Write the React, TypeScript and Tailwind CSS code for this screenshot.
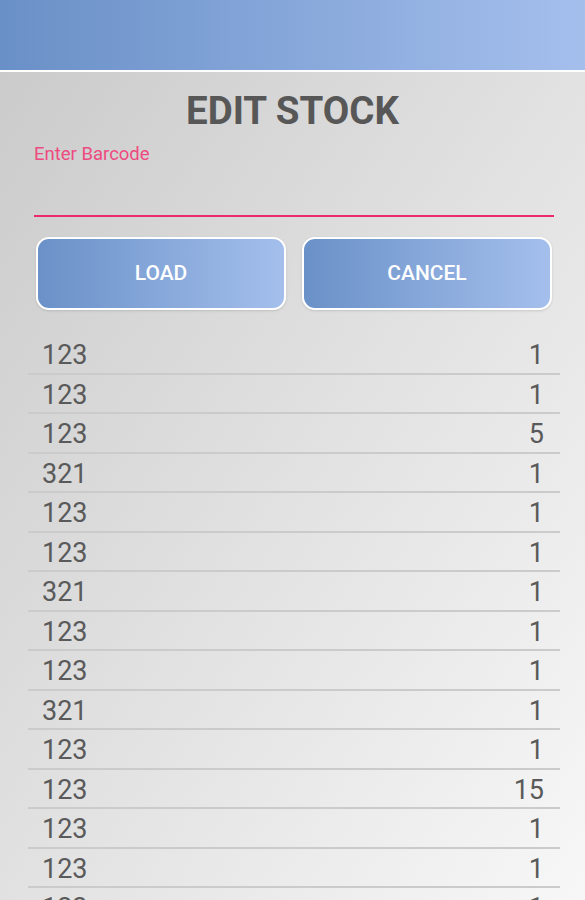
import React from "react";

const rows: [string, string][] = [
  ["123", "1"],
  ["123", "1"],
  ["123", "5"],
  ["321", "1"],
  ["123", "1"],
  ["123", "1"],
  ["321", "1"],
  ["123", "1"],
  ["123", "1"],
  ["321", "1"],
  ["123", "1"],
  ["123", "15"],
  ["123", "1"],
  ["123", "1"],
  ["123", "1"],
];

export default function App() {
  return (
    <div
      className="w-[585px] h-[900px] overflow-hidden flex flex-col"
      style={{ fontFamily: "Roboto, 'Noto Sans', sans-serif" }}
    >
      <div className="h-[70px] shrink-0 bg-linear-to-r from-[#6990c7] to-[#a5bfed]" />
      <div className="h-[2px] shrink-0 bg-white" />
      <div className="flex-1 flex flex-col bg-linear-to-br from-[#cbcbcb] via-[#e2e2e2] to-[#f8f8f8]">
        <h1 className="pt-[20px] text-center text-[38.5px] font-bold leading-none text-[#575757]">
          EDIT STOCK
        </h1>
        <div className="ml-[34px] mr-[31px] mt-[14px]">
          <div className="text-[18.5px] leading-none text-[#ee4a80]">Enter Barcode</div>
          <div className="mt-[52px] h-[2px] bg-[#ec2a6d]" />
        </div>
        <div className="mt-[20px] ml-[36px] mr-[33px] flex gap-[16px]">
          <button className="flex-1 h-[73px] rounded-[13px] border-2 border-white bg-linear-to-r from-[#6a91c8] to-[#a4bfec] text-white text-[21px] font-medium shadow-sm">
            LOAD
          </button>
          <button className="flex-1 h-[73px] rounded-[13px] border-2 border-white bg-linear-to-r from-[#6a91c8] to-[#a4bfec] text-white text-[21px] font-medium shadow-sm">
            CANCEL
          </button>
        </div>
        <div className="mt-[25px] ml-[28px] mr-[25px] flex flex-col">
          {rows.map(([a, b], i) => (
            <div
              key={i}
              className="h-[39.5px] shrink-0 flex items-center justify-between border-b-2 border-[#cbcbcb] pt-[4px] pl-[14px] pr-[16px] text-[27px] text-[#5a5a5a] leading-none"
            >
              <span>{a}</span>
              <span>{b}</span>
            </div>
          ))}
        </div>
      </div>
    </div>
  );
}
